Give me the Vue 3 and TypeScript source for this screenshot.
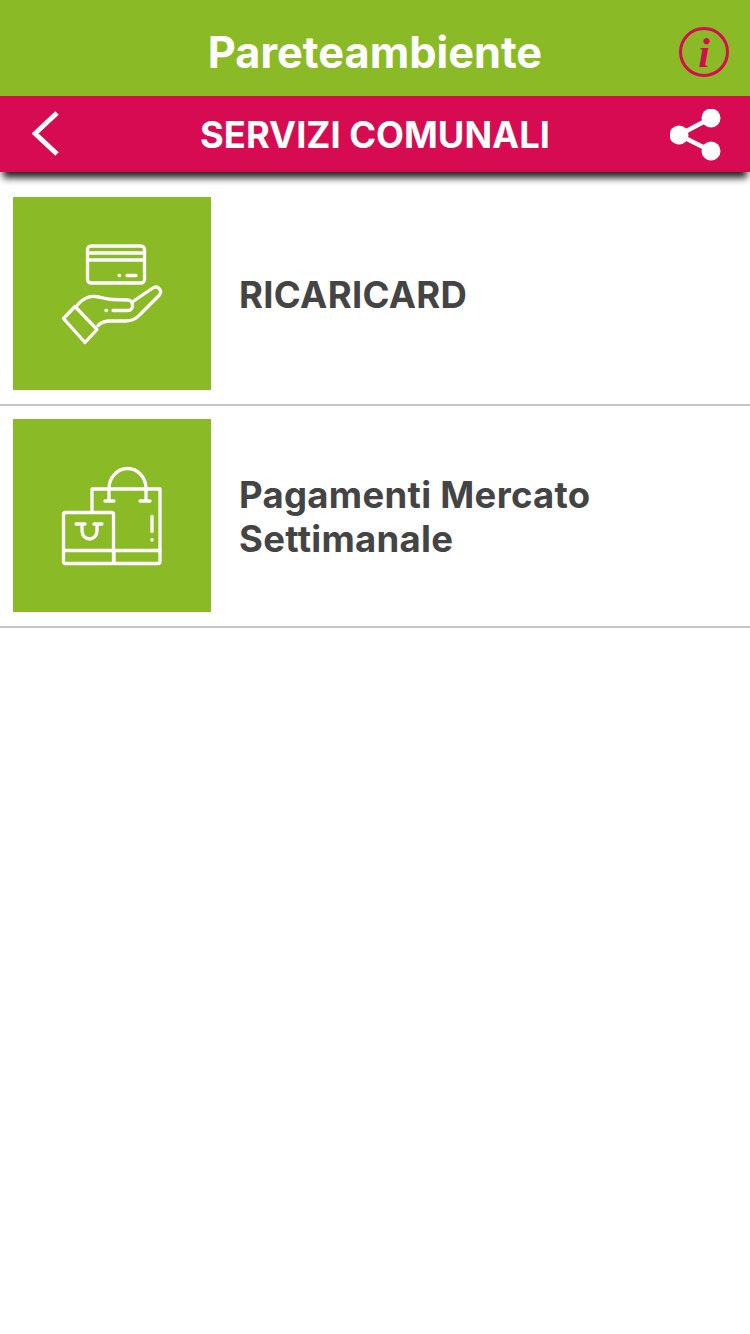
<template>
  <div class="page">
    <header class="topbar">
      <h1 class="app-title">Pareteambiente</h1>
      <div class="info-btn"><span>i</span></div>
    </header>
    <nav class="subbar">
      <div class="side">
        <svg viewBox="0 0 30 48" width="30" height="48">
          <path d="M25 3 L3 23.500 L25 44" fill="none" stroke="#fff" stroke-width="5" />
        </svg>
      </div>
      <h2 class="sub-title">SERVIZI COMUNALI</h2>
      <div class="side share">
        <svg viewBox="0 0 52 52" width="52" height="52">
          <path d="M41 9 L9 26 L41 42" fill="none" stroke="#fff" stroke-width="4.500" />
          <circle cx="41" cy="9" r="9.500" fill="#fff" />
          <circle cx="9" cy="26" r="9.500" fill="#fff" />
          <circle cx="41" cy="42" r="9.500" fill="#fff" />
        </svg>
      </div>
    </nav>
    <ul class="list">
      <li v-for="item in items" :key="item.id" class="row">
        <div class="tile">
          <svg :viewBox="item.box" width="140" height="130" fill="none" stroke="#fff" stroke-width="3.300" stroke-linecap="round" stroke-linejoin="round">
            <template v-if="item.id === 'card'">
              <rect x="47.500" y="15.500" width="57" height="37" rx="3.500" />
              <path d="M47.500 22.500 H104.500 M47.500 29.500 H104.500" />
              <path d="M79 45 H79.600 M87 45 H96" />
              <path d="M23.500 88 L35 76 L57 99 L45 112 Z" />
              <path d="M37 75 C42 69 48 65.500 55 66 C62 66.500 66 69 73 69 L88 69.500 C94 70 94 80 88 80 L73 80" />
              <path d="M66 80 H66.600" />
              <path d="M93 71 L112 58 C118 54 123 60 119 65 L100 84 C96 88.500 92 90.500 86 90.500 L70 90.500 C65 90.500 61 92 58 95" />
            </template>
            <template v-else>
              <rect x="23.500" y="62" width="50" height="51" rx="2" />
              <path d="M52 62 V38.500 H120 V111 A2 2 0 0 1 118 113 H73.500" />
              <path d="M23.500 100 H120 M74 100 V113" />
              <path d="M69 49 V38 A18.500 20 0 0 1 106 38 V49" />
              <path d="M65 50.500 H74 M100 50.500 H110" />
              <path d="M112 66 V81 M112 89 V89.500" />
              <path d="M42 74 V80.500 A7.500 8 0 0 0 57 80.500 V74 M36 73.500 H45 M54 73.500 H62" />
            </template>
          </svg>
        </div>
        <p class="label">{{ item.label }}</p>
      </li>
    </ul>
  </div>
</template>

<script setup lang="ts">
interface ServiceItem {
  id: string
  label: string
  box: string
}

const items: ServiceItem[] = [
  { id: 'card', label: 'RICARICARD', box: '2 -1.5 140 130' },
  { id: 'bags', label: 'Pagamenti Mercato Settimanale', box: '2 0.5 140 130' }
]
</script>

<style>
html,
body {
  margin: 0;
  background: #fff;
}
</style>

<style scoped>
.page {
  width: 750px;
  min-height: 1334px;
  background: #fff;
  font-family: Inter, "Liberation Sans", sans-serif;
}

.topbar {
  position: relative;
  height: 96px;
  box-sizing: border-box;
  padding-top: 8px;
  display: flex;
  align-items: center;
  justify-content: center;
  background: #8abb26;
}

.app-title {
  margin: 0;
  font-size: 43.300px;
  font-weight: 700;
  color: #fff;
}

.info-btn {
  position: absolute;
  left: 679px;
  top: 27px;
  width: 50px;
  height: 50px;
  box-sizing: border-box;
  padding-top: 2px;
  display: flex;
  align-items: center;
  justify-content: center;
  border: 3px solid #d60b52;
  border-radius: 50%;
  color: #d60b52;
  font: italic 700 42px "Liberation Serif", serif;
}

.subbar {
  position: relative;
  height: 76px;
  display: flex;
  align-items: center;
  justify-content: space-between;
  padding: 0 28px 0 32px;
  background: #d60b52;
  box-shadow: 0 9px 7px -3px rgba(0, 0, 0, 0.85);
}

.side {
  width: 52px;
  display: flex;
}

.share {
  margin-top: 2px;
}

.sub-title {
  margin: 2px 0 0 -4px;
  font-size: 36.300px;
  font-weight: 700;
  color: #fff;
}

.list {
  margin: 0;
  padding: 25px 0 0;
  list-style: none;
}

.row {
  height: 207px;
  margin-bottom: 13px;
  display: flex;
  align-items: flex-start;
  border-bottom: 2px solid #c6c6c6;
}

.tile {
  width: 198px;
  height: 193px;
  margin-left: 13px;
  flex: none;
  display: flex;
  align-items: center;
  justify-content: center;
  background: #8abb26;
}

.label {
  margin: 1px 0 0 28px;
  height: 193px;
  width: 400px;
  display: flex;
  align-items: center;
  font-size: 36.500px;
  font-weight: 700;
  letter-spacing: 0.3px;
  line-height: 44px;
  color: #444;
}
</style>
